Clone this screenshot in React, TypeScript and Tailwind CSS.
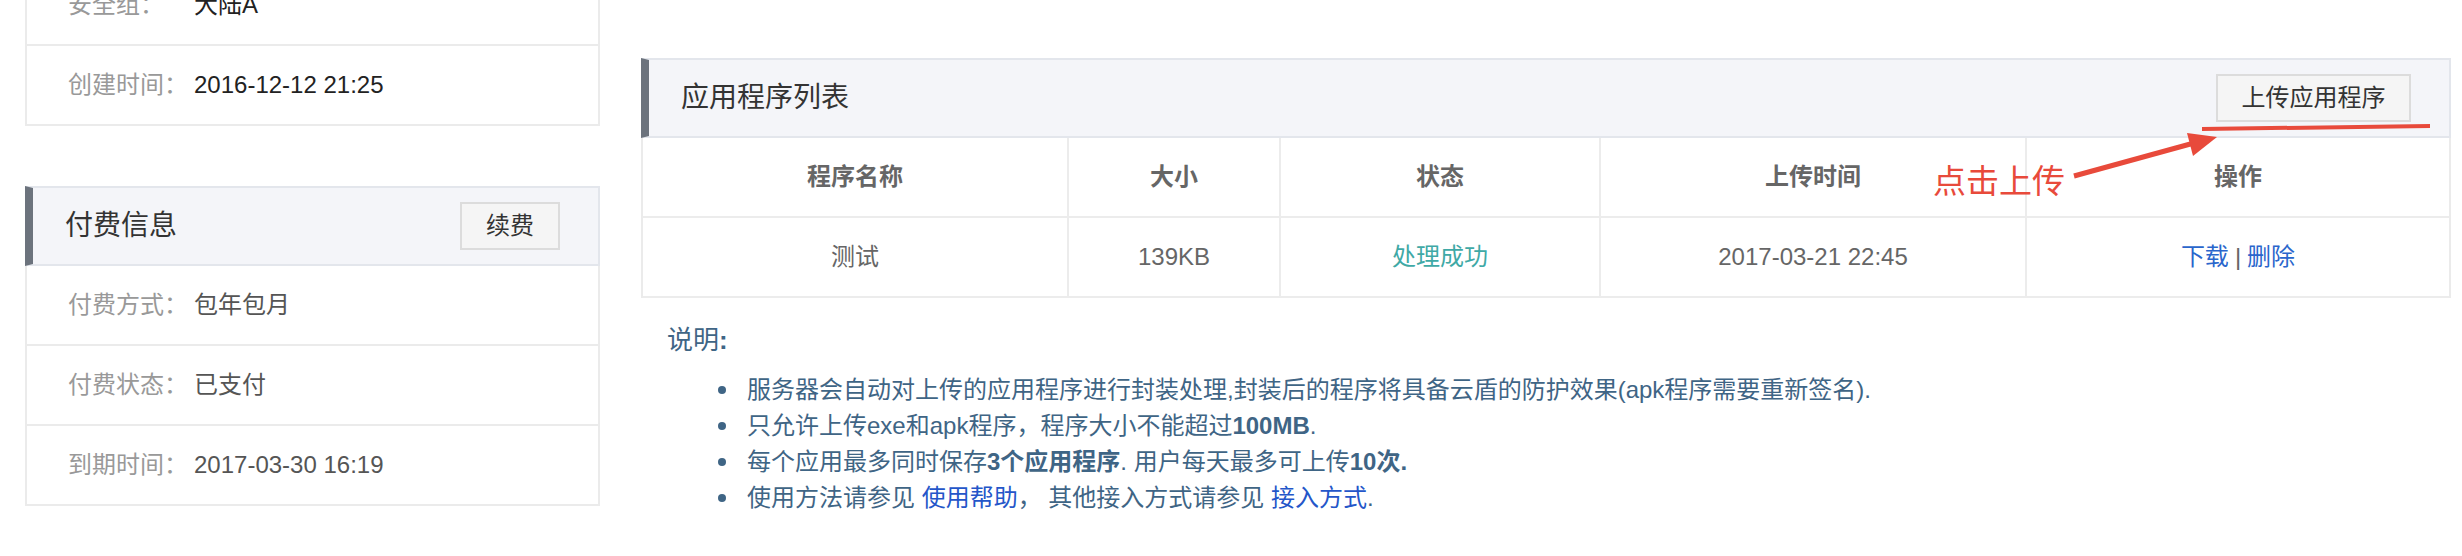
import React from 'react';

const InfoRow = ({ label, value, dark }: { label: string; value: string; dark?: boolean }) => (
  <div className="h-[80px] border-b-2 border-[#ebebeb] flex items-center pl-[41px] text-[24px]">
    <span className="w-[126px] text-[#999]">{label}</span>
    <span className={dark ? 'text-[#222]' : 'text-[#555]'}>{value}</span>
  </div>
);

const PanelHeader = ({ title, button, wide }: { title: string; button: string; wide?: boolean }) => (
  <div className="h-[80px] bg-[#f4f5f9] border-2 border-l-[8px] border-[#e3e6ec] border-l-[#6c737d] flex items-center justify-between pl-[32px] pr-[38px]">
    <span className="text-[28px] text-[#333]">{title}</span>
    <button
      className={
        'h-[48px] border-2 border-[#dcdcdc] bg-[#f5f5f5] text-[24px] text-[#333] ' +
        (wide ? 'w-[195px]' : 'w-[100px]')
      }
    >
      {button}
    </button>
  </div>
);

const Cell = ({ children, last }: { children: React.ReactNode; last?: boolean }) => (
  <div className={'flex items-center justify-center ' + (last ? '' : 'border-r-2 border-[#ececec]')}>
    {children}
  </div>
);

const notes = [
  <>服务器会自动对上传的应用程序进行封装处理,封装后的程序将具备云盾的防护效果(apk程序需要重新签名).</>,
  <>只允许上传exe和apk程序，程序大小不能超过<b>100MB</b>.</>,
  <>每个应用最多同时保存<b>3个应用程序</b>. 用户每天最多可上传<b>10次.</b></>,
  <>
    使用方法请参见 <a className="text-[#2456c9]">使用帮助</a>， 其他接入方式请参见 <a className="text-[#2456c9]">接入方式</a>.
  </>,
];

export default function App() {
  return (
    <div className="relative w-[2462px] h-[556px] overflow-hidden bg-white flex pl-[25px] font-['Liberation_Sans','Noto_Sans_CJK_SC',sans-serif]">
      {/* 左侧：基本信息 + 付费信息 */}
      <div className="w-[575px] -mt-[34px] flex flex-col self-start">
        <div className="border-x-2 border-[#ebebeb]">
          <InfoRow label="安全组：" value="大陆A" dark />
          <InfoRow label="创建时间：" value="2016-12-12 21:25" dark />
        </div>

        <div className="mt-[60px]">
          <PanelHeader title="付费信息" button="续费" />
          <div className="border-x-2 border-[#ebebeb]">
            <InfoRow label="付费方式：" value="包年包月" />
            <InfoRow label="付费状态：" value="已支付" />
            <InfoRow label="到期时间：" value="2017-03-30 16:19" />
          </div>
        </div>
      </div>

      {/* 右侧：应用程序列表 */}
      <div className="ml-[41px] w-[1810px] mt-[58px] self-start">
        <PanelHeader title="应用程序列表" button="上传应用程序" wide />
        <div className="border-x-2 border-[#ebebeb] text-[24px]">
          <div className="grid grid-cols-[426px_212px_320px_426px_1fr] h-[80px] border-b-2 border-[#ececec] font-bold text-[#666]">
            <Cell>程序名称</Cell>
            <Cell>大小</Cell>
            <Cell>状态</Cell>
            <Cell>上传时间</Cell>
            <Cell last>操作</Cell>
          </div>
          <div className="grid grid-cols-[426px_212px_320px_426px_1fr] h-[80px] border-b-2 border-[#ececec] text-[#666]">
            <Cell>测试</Cell>
            <Cell>139KB</Cell>
            <Cell>
              <span className="text-[#3fa9a6]">处理成功</span>
            </Cell>
            <Cell>2017-03-21 22:45</Cell>
            <Cell last>
              <span className="text-[#2a66cc]">下载</span>
              <span className="text-[#666] px-[6px]">|</span>
              <span className="text-[#2a66cc]">删除</span>
            </Cell>
          </div>
        </div>

        <div className="pl-[26px] mt-[24px] text-[#3f6585]">
          <div className="text-[26px] leading-[36px]">
            说明<b>:</b>
          </div>
          <ul className="mt-[14px] pl-[51px] text-[24px] leading-[36px]">
            {notes.map((n, i) => (
              <li key={i} className="flex items-center">
                <span className="w-[8px] h-[8px] rounded-full bg-[#3f6585] mr-[21px] shrink-0" />
                <span>{n}</span>
              </li>
            ))}
          </ul>
        </div>
      </div>

      {/* 标注：点击上传 */}
      <span className="absolute left-[1933px] top-[163px] text-[33px] leading-[33px] text-[#e84a3b] font-['Noto_Sans_CJK_SC',sans-serif]">
        点击上传
      </span>
      <svg className="absolute left-0 top-0 pointer-events-none" width="2462" height="556">
        <line x1="2202" y1="129" x2="2430" y2="126" stroke="#e84a3b" strokeWidth="4" />
        <line x1="2074" y1="176" x2="2194" y2="143" stroke="#e84a3b" strokeWidth="5" />
        <polygon points="2217,137 2187,133 2193,156" fill="#e84a3b" />
      </svg>
    </div>
  );
}
